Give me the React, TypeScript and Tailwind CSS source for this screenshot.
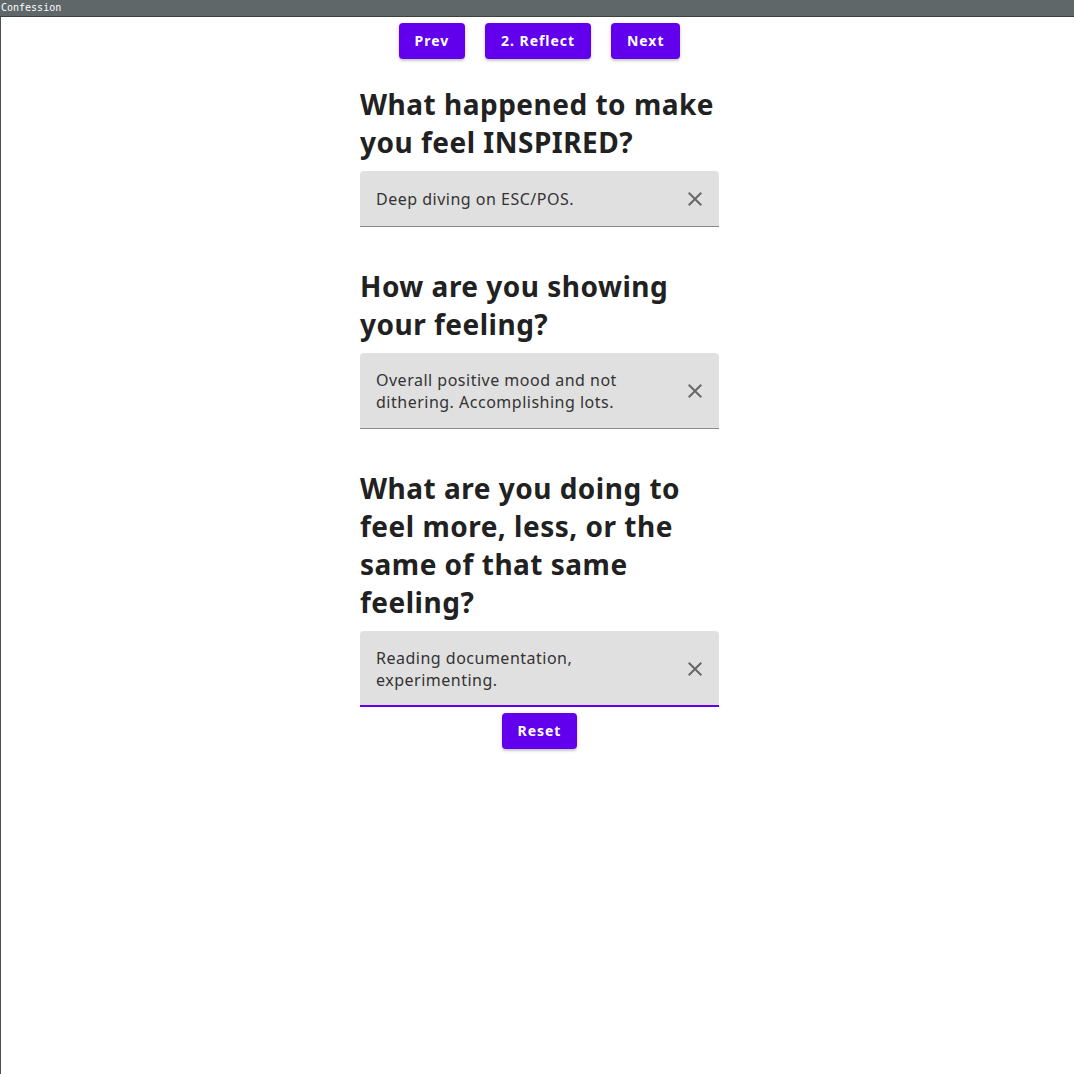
import React from "react";

const questions = [
  {
    title: "What happened to make you feel INSPIRED?",
    answer: "Deep diving on ESC/POS.",
    focused: false,
  },
  {
    title: "How are you showing your feeling?",
    answer: "Overall positive mood and not dithering. Accomplishing lots.",
    focused: false,
  },
  {
    title: "What are you doing to feel more, less, or the same of that same feeling?",
    answer: "Reading documentation, experimenting.",
    focused: true,
  },
];

function Button({ label }: { label: string }) {
  return (
    <button className="h-9 px-4 rounded bg-[#6200ee] text-white text-sm font-bold tracking-[0.95px] shadow-[0_2px_2px_rgba(0,0,0,0.14),0_1px_5px_rgba(0,0,0,0.12)]">
      {label}
    </button>
  );
}

function CloseIcon() {
  return (
    <svg width="24" height="24" viewBox="0 0 24 24" className="shrink-0">
      <path
        d="M19 6.41L17.59 5 12 10.59 6.41 5 5 6.41 10.59 12 5 17.59 6.41 19 12 13.41 17.59 19 19 17.59 13.41 12z"
        fill="rgba(0,0,0,0.54)"
      />
    </svg>
  );
}

function Field({ answer, focused }: { answer: string; focused: boolean }) {
  return (
    <div
      className={
        focused
          ? "flex items-center min-h-14 pt-4 pb-[14px] pl-4 pr-3 rounded-t bg-[#e0e0e0] border-b-2 border-[#6200ee]"
          : "flex items-center min-h-14 pt-4 pb-[15px] pl-4 pr-3 rounded-t bg-[#e0e0e0] border-b border-[#8a8a8a]"
      }
    >
      <p className="flex-1 pr-6 text-base leading-[22px] tracking-[0.5px] text-[#333]">
        {answer}
      </p>
      <CloseIcon />
    </div>
  );
}

export default function App() {
  return (
    <div className="h-[1074px] flex flex-col bg-white font-['Noto_Sans',sans-serif]">
      <div className="h-[17px] shrink-0 bg-[#5f6769] border-b border-[#3c4244] px-px font-['DejaVu_Sans_Mono',monospace] text-[10px] leading-[15px] text-white">
        Confession
      </div>
      <div className="flex-1 border-l border-[#4a5254] pl-1 flex flex-col items-center">
        <div className="flex gap-5 mt-[6px]">
          <Button label="Prev" />
          <Button label="2. Reflect" />
          <Button label="Next" />
        </div>
        <div className="w-[359px] mt-[26px] flex flex-col gap-10">
          {questions.map((q) => (
            <section key={q.title}>
              <h2 className="text-[28px] leading-[38px] tracking-[0.5px] font-bold text-[#212121] mb-[10px]">
                {q.title}
              </h2>
              <Field answer={q.answer} focused={q.focused} />
            </section>
          ))}
        </div>
        <div className="mt-[6px]">
          <Button label="Reset" />
        </div>
      </div>
    </div>
  );
}
